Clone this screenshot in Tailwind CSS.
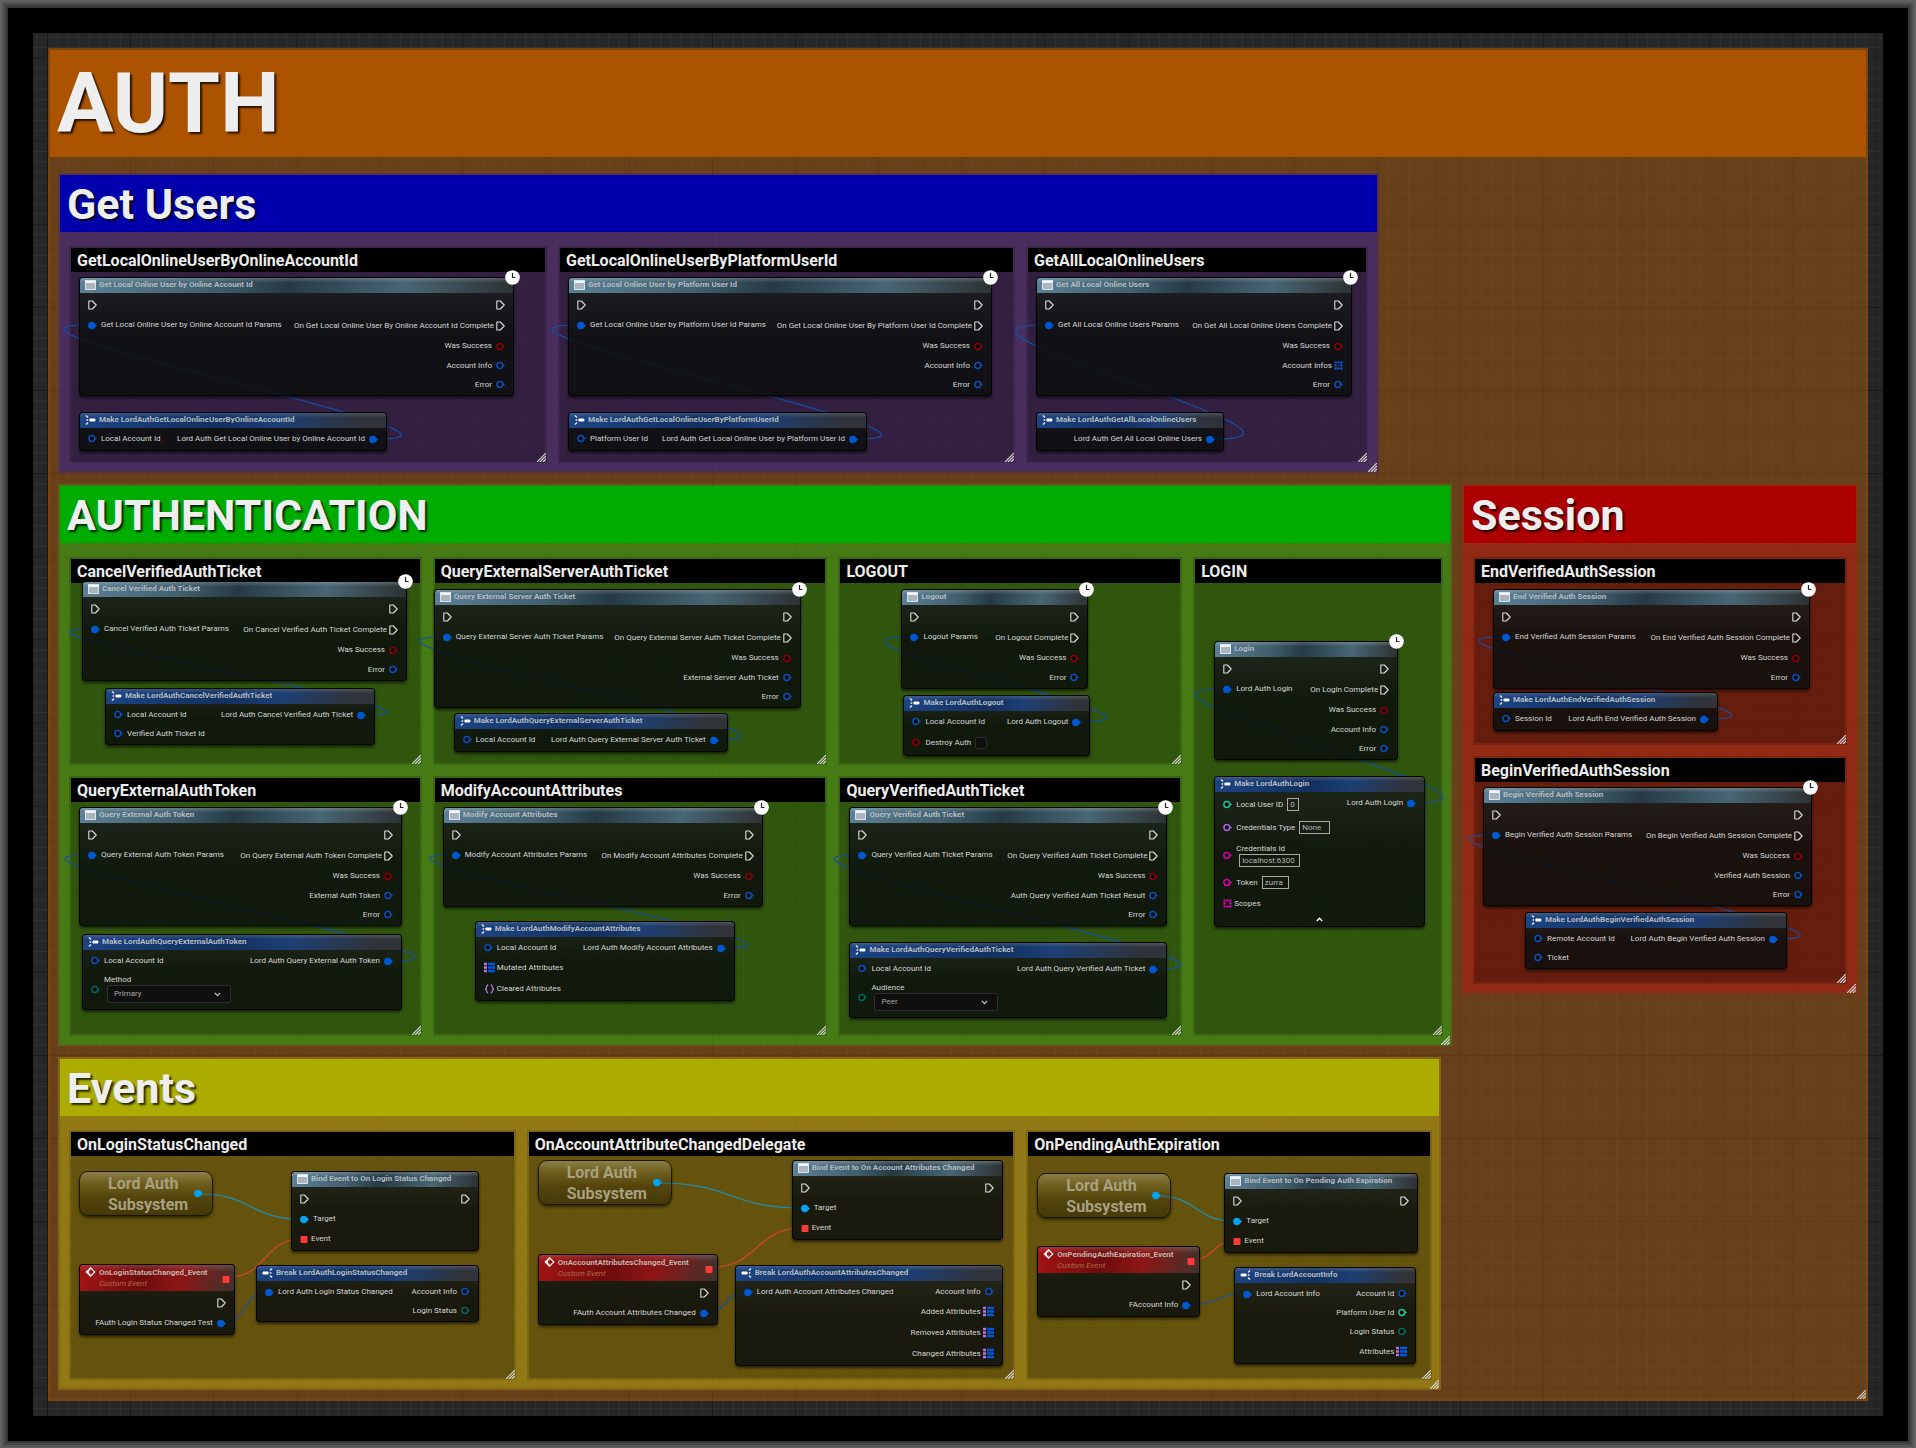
<!DOCTYPE html>
<html lang="en">
<head>
<meta charset="utf-8">
<meta name="viewport" content="width=device-width, initial-scale=1">
<title>Auth blueprint graph</title>
<script src="https://cdn.jsdelivr.net/npm/@tailwindcss/browser@4"></script>
</head>
<body class="min-h-screen bg-black font-['Roboto',sans-serif] text-[#d6d6d6]">
<div class="flex min-h-screen flex-col p-[33px] shadow-[inset_0_0_0_2px_#616161,inset_0_0_0_4px_#545454,inset_0_0_0_6px_#474747,inset_0_0_0_8px_#363636]">
  <main class="relative flex grow flex-col bg-[#262626] p-[15px]">
    <!-- graph paper -->
    <svg class="absolute inset-0 h-full w-full" aria-hidden="true">
      <defs>
        <pattern id="minor" width="10.39" height="10.39" patternUnits="userSpaceOnUse" x="14" y="24.5">
          <path d="M0 .5H10.39M.5 0V10.39" stroke="#313131" fill="none"/>
        </pattern>
        <pattern id="major" width="83.12" height="83.12" patternUnits="userSpaceOnUse" x="14" y="24.5">
          <path d="M0 .5H83.12M.5 0V83.12" stroke="#181818" fill="none"/>
        </pattern>
      </defs>
      <rect width="100%" height="100%" fill="url(#minor)"/>
      <rect width="100%" height="100%" fill="url(#major)"/>
    </svg>

    <div class="relative flex grow flex-col border-2 border-[#a05000]/30 bg-[#a8590e]/50">
      <header class="flex h-[107px] items-center bg-[#ac5300] px-[7px]">
        <h1 class="text-[84px] leading-none font-bold text-[#eee] [text-shadow:2px_2px_2px_#000c]">AUTH</h1>
      </header>

      <div class="flex flex-col gap-[11px] px-2 pt-4 pb-[9px]">
        <div class="grid grid-cols-[1321fr_479fr]">
          <section class="relative min-w-0 border-2 border-[#2618af]/30 bg-[#2618af]/45 bg-clip-padding">
            <header class="flex h-[57px] items-center bg-[#0000ac] px-[7px] pt-[2px]">
              <h2 class="text-[43px] leading-none font-bold text-[#eee] [text-shadow:2px_2px_2px_#000c]">Get Users</h2>
            </header>
            <div id="users" class="grid grid-cols-[478fr_457fr_342fr] gap-[11px] px-[9px] pt-[14px] pb-2"></div>
            <svg class="absolute right-0 -bottom-px size-[9px]" viewBox="0 0 9 9" aria-hidden="true"><path d="M0 9L9 0M3 9L9 3M6 9L9 6" stroke="#d8d8d8" stroke-width="1.2"/></svg>
          </section>
        </div>

        <div class="grid grid-cols-[1394fr_396fr] items-start gap-[10px]">
          <section class="relative min-w-0 border-2 border-[#1dc10d]/30 bg-[#1dc10d]/45 bg-clip-padding">
            <header class="flex h-[57px] items-center bg-[#00ac00] px-[7px] pt-[2px]">
              <h2 class="text-[43px] leading-none font-bold text-[#eee] [text-shadow:2px_2px_2px_#000c]">AUTHENTICATION</h2>
            </header>
            <div id="authentication" class="grid grid-cols-[353fr_395fr_344fr_250fr] gap-[11px] pt-[14px] pr-[7px] pb-2 pl-[9px]"></div>
            <svg class="absolute right-0 -bottom-px size-[9px]" viewBox="0 0 9 9" aria-hidden="true"><path d="M0 9L9 0M3 9L9 3M6 9L9 6" stroke="#d8d8d8" stroke-width="1.2"/></svg>
          </section>
          <section class="relative min-w-0 border-2 border-[#c30f0d]/30 bg-[#c30f0d]/45 bg-clip-padding">
            <header class="flex h-[57px] items-center bg-[#ac0000] px-[7px] pt-[2px]">
              <h2 class="text-[43px] leading-none font-bold text-[#eee] [text-shadow:2px_2px_2px_#000c]">Session</h2>
            </header>
            <div id="session" class="grid gap-[11px] px-[9px] pt-[14px] pb-2"></div>
            <svg class="absolute right-0 -bottom-px size-[9px]" viewBox="0 0 9 9" aria-hidden="true"><path d="M0 9L9 0M3 9L9 3M6 9L9 6" stroke="#d8d8d8" stroke-width="1.2"/></svg>
          </section>
        </div>

        <div class="grid grid-cols-[1383fr_417fr]">
          <section class="relative min-w-0 border-2 border-[#c5bd0d]/30 bg-[#c5bd0d]/45 bg-clip-padding">
            <header class="flex h-[57px] items-center bg-[#acac00] px-[7px] pt-[2px]">
              <h2 class="text-[43px] leading-none font-bold text-[#eee] [text-shadow:2px_2px_2px_#000c]">Events</h2>
            </header>
            <div id="events" class="grid grid-cols-[447fr_489fr_406fr] gap-[11px] pt-[14px] pr-[7px] pb-2 pl-[9px]"></div>
            <svg class="absolute right-0 -bottom-px size-[9px]" viewBox="0 0 9 9" aria-hidden="true"><path d="M0 9L9 0M3 9L9 3M6 9L9 6" stroke="#d8d8d8" stroke-width="1.2"/></svg>
          </section>
        </div>
      </div>
      <svg class="absolute right-0 bottom-0 size-[9px]" viewBox="0 0 9 9" aria-hidden="true"><path d="M0 9L9 0M3 9L9 3M6 9L9 6" stroke="#d8d8d8" stroke-width="1.2"/></svg>
    </div>
  </main>
</div>

<script>
const svg = (w, h, body, cls = '') =>
  `<svg class="shrink-0 ${cls}" width="${w}" height="${h}" viewBox="0 0 ${w} ${h}" fill="none" aria-hidden="true">${body}</svg>`;

// Pin glyphs
const ring = c => svg(9, 9, `<circle cx="3.8" cy="4.5" r="2.9" fill="#060a0c" stroke="${c}" stroke-width="1.5"/><path d="M7.2 3L9 4.5L7.2 6z" fill="${c}"/>`);
const dot = c => svg(9, 9, `<circle cx="3.8" cy="4.5" r="3.7" fill="${c}"/><path d="M7 2.8L9 4.5L7 6.2z" fill="${c}"/>`);
const PINS = {
  exec: svg(9, 10, '<path d="M.8 1H4.3L8.2 5L4.3 9H.8z" stroke="#dcdcdc" stroke-width="1.1" stroke-linejoin="round"/>'),
  blue: ring('#0a50b8'), bool: ring('#8c0202'), int: ring('#1fc795'), enum: ring('#00695a'),
  name: ring('#a565d8'), str: ring('#d800a8'), full: dot('#0058d0'), obj: dot('#00a2f2'),
  delegate: svg(9, 9, '<rect x=".5" y="1" width="7" height="7" rx="1" fill="#ff3838"/>'),
  array: svg(9, 9, '<path d="M.5 1.5H8.5M.5 7.5H8.5M.5 4.5H2.7M6.3 4.5H8.5" stroke="#0a5fe0" stroke-width="2" stroke-dasharray="2.2 .7"/><rect x="4" y="4" width="1" height="1" fill="#0a5fe0"/>'),
  strArray: svg(9, 9, '<path d="M.5 1.5H8.5M.5 7.5H8.5M.5 4.5H2.7M6.3 4.5H8.5" stroke="#f000b8" stroke-width="2" stroke-dasharray="2.2 .7"/>'),
  map: svg(11, 11, '<path d="M0 2H3M0 5.5H3M0 9H3" stroke="#b672e8" stroke-width="2.4"/><path d="M4 2H11M4 5.5H11M4 9H11" stroke="#0058e0" stroke-width="2.4"/>'),
  set: svg(11, 10, '<path d="M4.2 1C1.8 1 3.6 4.4 1.2 5C3.6 5.6 1.8 9 4.2 9M6.8 1C9.2 1 7.4 4.4 9.8 5C7.4 5.6 9.2 9 6.8 9" stroke="#b672e8" stroke-width="1.3"/>')
};

// Title bar glyphs
const ICONS = {
  async: svg(11, 10, '<rect width="11" height="10" fill="#a9b6bf"/><rect width="11" height="3" fill="#f2f6f8"/><path d="M.5 .5H10.5V9.5H.5z" stroke="#dce4e9"/>'),
  make: svg(11, 10, '<path d="M1 .5L3 2.5M1 9.5L3 7.5" stroke="#e6e6e6" stroke-width="1.5"/><rect x="1.6" y="4.2" width="1.6" height="1.6" fill="#e6e6e6"/><rect x="4.4" y="3.5" width="6" height="3" rx="1" fill="#fff"/>'),
  break: svg(11, 10, '<path d="M10 .5L8 2.5M10 9.5L8 7.5" stroke="#e6e6e6" stroke-width="1.5"/><rect x="7.8" y="4.2" width="1.6" height="1.6" fill="#e6e6e6"/><rect x=".6" y="3.5" width="6" height="3" rx="1" fill="#fff"/>'),
  event: svg(11, 10, '<path d="M5.5 .8L9.8 5L5.5 9.2L1.2 5z" stroke="#eee" stroke-width="1.2"/><path d="M5.5 .8L1.2 5L5.5 9.2V6.6H4V3.4H5.5z" fill="#eee"/>')
};
ICONS.bind = ICONS.async;

const HEADS = {
  async: 'bg-[linear-gradient(180deg,#ffffff33,transparent_30%),linear-gradient(100deg,#5c8096,#42606f_30%,#263a46_48%,#486674_75%,#2d3133)]',
  make: 'bg-[linear-gradient(180deg,#ffffff26,transparent_30%),linear-gradient(100deg,#1d4483,#12305f_45%,#1d3f74_65%,#30333a_92%)]',
  event: 'bg-[linear-gradient(180deg,#ffffff26,transparent_25%),linear-gradient(100deg,#a31414,#6e0c0c_40%,#8d1616_65%,#45302a_98%)]'
};
HEADS.bind = HEADS.async;
HEADS.break = HEADS.make;

const clock = svg(15, 15, '<circle cx="7.5" cy="7.5" r="7.3" fill="#fff"/><path d="M7.5 3V7.5H10.5" stroke="#222" stroke-width="1.2"/>', 'absolute -top-2 -right-[7px]');

// Row height of each kind of pin
const ROWS = {exec: 'h-[21px]', full: 'h-5', bool: 'h-5', obj: 'h-5', delegate: 'h-5', map: 'h-[21px]', set: 'h-[21px]'};
const rowOf = kind => ROWS[kind] || 'h-[19px]';
const TIGHT = ['exec', 'array', 'strArray', 'delegate', 'map', 'set'];
const gapOf = kind => TIGHT.includes(kind) ? 'gap-[2px]' : 'gap-1';

let fieldId = 0;
const pinIn = p => {
  const [kind, label, extra, value] = p;
  const pin = PINS[kind];
  const gap = gapOf(kind);
  const id = 'field' + (++fieldId);
  if (extra === 'text') return `<div class="flex h-[23px] items-center ${gap}">${pin}<label for="${id}">${label}</label><input id="${id}" value="${value[0]}" class="h-[13px] border border-[#a8a8a8] px-[2px] text-[8px] leading-none text-[#b4b4b4] ${value[1]}"></div>`;
  if (extra === 'stacked') return `<div class="flex h-8 items-center ${gap}">${pin}<div class="flex flex-col"><label for="${id}">${label}</label><input id="${id}" value="${value[0]}" class="ml-[3px] h-[13px] border border-[#a8a8a8] px-[2px] text-[8px] leading-none text-[#b4b4b4] ${value[1]}"></div></div>`;
  if (extra === 'check') return `<div class="flex h-[23px] items-center ${gap}">${pin}<label for="${id}">${label}</label><input id="${id}" type="checkbox" class="size-3 appearance-none rounded-[2px] border border-[#2c2c2c] bg-[#0f0f0f]"></div>`;
  if (extra === 'select') return `<div class="flex h-[38px] items-center ${gap}">${pin}<div class="flex flex-col"><label for="${id}">${label}</label><div class="relative ml-[3px]"><select id="${id}" class="block h-[18px] w-[124px] appearance-none rounded-[2px] border border-[#2e2e2e] bg-[#0f0f0f] px-[6px] text-[8px] leading-none text-[#a8a8a8]"><option>${value}</option></select>${svg(7, 5, '<path d="M.8 .8L3.5 3.6L6.2 .8" stroke="#c8c8c8" stroke-width="1.2"/>', 'pointer-events-none absolute top-[7px] right-[10px]')}</div></div></div>`;
  return `<div class="flex items-center ${rowOf(kind)} ${gap}">${pin}${label ? `<span>${label}</span>` : ''}</div>`;
};
const pinOut = ([kind, label]) =>
  `<div class="flex items-center justify-end ${rowOf(kind)} ${gapOf(kind)}">${label ? `<span>${label}</span>` : ''}${PINS[kind]}</div>`;

function node(n) {
  const place = `style="left:${n.x}px;top:${n.y}px;width:${n.w}px"`;
  if (n.type === 'variable') {
    return `<div class="absolute flex h-[45px] items-center justify-between rounded-[9px] border border-[#1a1804] bg-[linear-gradient(180deg,#ffffff40,#ffffff12_25%,#00000030_60%,#00000050)] pr-[9px] pl-7 text-[16px] leading-[21px] font-bold text-[#a8a080] shadow-[0_2px_3px_#0008]" ${place}><span>Lord Auth<br>Subsystem</span>${PINS.obj}</div>`;
  }
  const head = n.type === 'event'
    ? `<header class="flex h-[26px] items-start gap-[3px] rounded-t-[3px] pt-[2px] pr-[3px] pl-[5px] ${HEADS.event}">${ICONS.event}<div class="grow font-bold leading-[11px] text-[#c4b4ae]"><h4>${n.title}</h4><p class="font-normal text-[#b06a4c] italic">Custom Event</p></div><span class="self-center">${PINS.delegate}</span></header>`
    : `<header class="flex h-[15px] items-center gap-[3px] rounded-t-[3px] pb-px pl-[5px] ${HEADS[n.type]}">${ICONS[n.type]}<h4 class="font-bold text-[#b3bbc0]">${n.title}</h4></header>`;
  return `<div class="absolute rounded-[4px] border border-black/80 bg-[linear-gradient(180deg,#ffffff10,transparent_50%)] bg-[#0c0f0e]/85 text-[8px] leading-[10px] whitespace-nowrap shadow-[0_2px_3px_#0009]" ${place}>
    ${head}
    <div class="flex justify-between px-2 pt-px pb-px"><div>${n.in.map(pinIn).join('')}</div><div>${n.out.map(pinOut).join('')}</div></div>
    ${n.more ? `<button type="button" aria-label="Collapse" class="mx-auto flex h-3 items-start justify-center pt-[3px]">${svg(7, 5, '<path d="M.8 4L3.5 1.2L6.2 4" stroke="#fff" stroke-width="1.4"/>')}</button>` : ''}
    ${n.type === 'async' ? clock : ''}
  </div>`;
}

// Wires leave an output to the right and enter an input from the left
function wire(x1, y1, x2, y2, color) {
  const d = x2 > x1 ? (x2 - x1) / 2 : 95 + 0.46 * Math.abs(y1 - y2);
  return `<path d="M${x1} ${y1}C${x1 + d} ${y1} ${x2 - d} ${y2} ${x2} ${y2}" stroke="${color}" stroke-width="1.2"/>`;
}

function comment(c) {
  return `<article class="relative min-w-0 border-2 border-black/15 bg-black/30 bg-clip-padding ${c.size}">
    <h3 class="flex h-6 items-center bg-black px-[6px] pt-[2px] text-[16px] leading-none font-bold text-[#ececec]">${c.title}</h3>
    <svg class="absolute inset-0 h-full w-full overflow-visible" fill="none" aria-hidden="true">${c.wires.join('')}</svg>
    ${c.nodes.map(node).join('')}
    ${svg(9, 9, '<path d="M0 9L9 0M3 9L9 3M6 9L9 6" stroke="#d8d8d8" stroke-width="1.2"/>', 'absolute -right-px -bottom-px')}
  </article>`;
}

const BLUE = '#1450a8';

// An async call with the "Make" node that feeds its params
function call(title, size, a, m) {
  const A = {type: 'async', x: a.at[0], y: a.at[1], w: a.at[2], title: a.title,
    in: [['exec'], ['full', a.params || a.title + ' Params']],
    out: [['exec'], ['exec', `On ${a.done || a.title} Complete`], ['bool', 'Was Success'], ...a.out]};
  const M = {type: 'make', x: m.at[0], y: m.at[1], w: m.at[2], title: 'Make ' + m.title, in: m.in, out: [['full', m.out]], more: m.more};
  return comment({title, size, nodes: [A, M],
    wires: [wire(M.x + M.w - 10, M.y + 27, A.x + 9, A.y + 48, BLUE)]});
}

function event(title, size, v, b, e, k) {
  return comment({title, size,
    wires: [
      wire(v[0] + 122, v[1] + 23, b.at[0] + 9, b.at[1] + 48, '#1c8fb8'),
      wire(e.at[0] + e.at[2] - 5, e.at[1] + 13, b.at[0] + 9, b.at[1] + 68, '#d8442c'),
      wire(e.at[0] + e.at[2] - 10, e.at[1] + 59, k.at[0] + 9, k.at[1] + 27, BLUE)],
    nodes: [
      {type: 'variable', x: v[0], y: v[1], w: 134},
      {type: 'bind', x: b.at[0], y: b.at[1], w: b.at[2], title: b.title, in: [['exec'], ['obj', 'Target'], ['delegate', 'Event']], out: [['exec']]},
      {type: 'event', x: e.at[0], y: e.at[1], w: e.at[2], title: e.title, in: [], out: [['exec'], ['full', e.out]]},
      {type: 'break', x: k.at[0], y: k.at[1], w: k.at[2], title: 'Break ' + k.title, in: [['full', k.in]], out: k.out}]});
}

document.getElementById('users').innerHTML = [
  call('GetLocalOnlineUserByOnlineAccountId', 'min-h-[217px]',
    {at: [8, 29, 435], title: 'Get Local Online User by Online Account Id', done: 'Get Local Online User By Online Account Id', out: [['blue', 'Account Info'], ['blue', 'Error']]},
    {at: [8, 164, 308], title: 'LordAuthGetLocalOnlineUserByOnlineAccountId', in: [['blue', 'Local Account Id']], out: 'Lord Auth Get Local Online User by Online Account Id'}),
  call('GetLocalOnlineUserByPlatformUserId', 'min-h-[217px]',
    {at: [8, 29, 424], title: 'Get Local Online User by Platform User Id', done: 'Get Local Online User By Platform User Id', out: [['blue', 'Account Info'], ['blue', 'Error']]},
    {at: [8, 164, 299], title: 'LordAuthGetLocalOnlineUserByPlatformUserId', in: [['blue', 'Platform User Id']], out: 'Lord Auth Get Local Online User by Platform User Id'}),
  call('GetAllLocalOnlineUsers', 'min-h-[217px]',
    {at: [8, 29, 316], title: 'Get All Local Online Users', out: [['array', 'Account Infos'], ['blue', 'Error']]},
    {at: [8, 164, 188], title: 'LordAuthGetAllLocalOnlineUsers', in: [], out: 'Lord Auth Get All Local Online Users'})
].join('');

document.getElementById('authentication').innerHTML = [
  call('CancelVerifiedAuthTicket', 'min-h-[208px]',
    {at: [11, 22, 325], title: 'Cancel Verified Auth Ticket', out: [['blue', 'Error']]},
    {at: [34, 129, 270], title: 'LordAuthCancelVerifiedAuthTicket', in: [['blue', 'Local Account Id'], ['blue', 'Verified Auth Ticket Id']], out: 'Lord Auth Cancel Verified Auth Ticket'}),
  call('QueryExternalServerAuthTicket', 'min-h-[208px]',
    {at: [-1, 30, 367], title: 'Query External Server Auth Ticket', out: [['blue', 'External Server Auth Ticket'], ['blue', 'Error']]},
    {at: [19, 154, 274], title: 'LordAuthQueryExternalServerAuthTicket', in: [['blue', 'Local Account Id']], out: 'Lord Auth Query External Server Auth Ticket'}),
  call('LOGOUT', 'min-h-[208px]',
    {at: [61, 30, 187], title: 'Logout', out: [['blue', 'Error']]},
    {at: [63, 136, 187], title: 'LordAuthLogout', in: [['blue', 'Local Account Id'], ['bool', 'Destroy Auth', 'check']], out: 'Lord Auth Logout'}),
  call('LOGIN', 'row-span-2',
    {at: [19, 82, 184], title: 'Login', params: 'Lord Auth Login', out: [['blue', 'Account Info'], ['blue', 'Error']]},
    {at: [19, 217, 211], title: 'LordAuthLogin', more: true, out: 'Lord Auth Login',
      in: [['int', 'Local User ID', 'text', ['0', 'w-3']], ['name', 'Credentials Type', 'text', ['None', 'w-[31px]']],
        ['str', 'Credentials Id', 'stacked', ['localhost:6300', 'w-[61px]']], ['str', 'Token', 'text', ['zurra', 'w-[27px]']], ['strArray', 'Scopes']]}),
  call('QueryExternalAuthToken', 'min-h-[260px]',
    {at: [8, 29, 323], title: 'Query External Auth Token', out: [['blue', 'External Auth Token'], ['blue', 'Error']]},
    {at: [11, 156, 320], title: 'LordAuthQueryExternalAuthToken', in: [['blue', 'Local Account Id'], ['enum', 'Method', 'select', 'Primary']], out: 'Lord Auth Query External Auth Token'}),
  call('ModifyAccountAttributes', 'min-h-[260px]',
    {at: [8, 29, 320], title: 'Modify Account Attributes', out: [['blue', 'Error']]},
    {at: [40, 143, 260], title: 'LordAuthModifyAccountAttributes', in: [['blue', 'Local Account Id'], ['map', 'Mutated Attributes'], ['set', 'Cleared Attributes']], out: 'Lord Auth Modify Account Attributes'}),
  call('QueryVerifiedAuthTicket', 'min-h-[260px]',
    {at: [9, 29, 318], title: 'Query Verified Auth Ticket', out: [['blue', 'Auth Query Verified Auth Ticket Result'], ['blue', 'Error']]},
    {at: [9, 164, 318], title: 'LordAuthQueryVerifiedAuthTicket', in: [['blue', 'Local Account Id'], ['enum', 'Audience', 'select', 'Peer']], out: 'Lord Auth Query Verified Auth Ticket'})
].join('');

document.getElementById('session').innerHTML = [
  call('EndVerifiedAuthSession', 'min-h-[188px]',
    {at: [18, 30, 317], title: 'End Verified Auth Session', out: [['blue', 'Error']]},
    {at: [18, 133, 225], title: 'LordAuthEndVerifiedAuthSession', in: [['blue', 'Session Id']], out: 'Lord Auth End Verified Auth Session'}),
  call('BeginVerifiedAuthSession', 'min-h-[228px]',
    {at: [8, 29, 329], title: 'Begin Verified Auth Session', out: [['blue', 'Verified Auth Session'], ['blue', 'Error']]},
    {at: [50, 154, 262], title: 'LordAuthBeginVerifiedAuthSession', in: [['blue', 'Remote Account Id'], ['blue', 'Ticket']], out: 'Lord Auth Begin Verified Auth Session'})
].join('');

document.getElementById('events').innerHTML = [
  event('OnLoginStatusChanged', 'min-h-[250px]', [8, 39],
    {at: [220, 39, 188], title: 'Bind Event to On Login Status Changed'},
    {at: [8, 132, 156], title: 'OnLoginStatusChanged_Event', out: 'FAuth Login Status Changed Test'},
    {at: [185, 133, 223], title: 'LordAuthLoginStatusChanged', in: 'Lord Auth Login Status Changed', out: [['blue', 'Account Info'], ['enum', 'Login Status']]}),
  event('OnAccountAttributeChangedDelegate', 'min-h-[250px]', [9, 28],
    {at: [263, 28, 211], title: 'Bind Event to On Account Attributes Changed'},
    {at: [9, 122, 180], title: 'OnAccountAttributesChanged_Event', out: 'FAuth Account Attributes Changed'},
    {at: [206, 133, 268], title: 'LordAuthAccountAttributesChanged', in: 'Lord Auth Account Attributes Changed', out: [['blue', 'Account Info'], ['map', 'Added Attributes'], ['map', 'Removed Attributes'], ['map', 'Changed Attributes']]}),
  event('OnPendingAuthExpiration', 'min-h-[250px]', [9, 41],
    {at: [196, 41, 194], title: 'Bind Event to On Pending Auth Expiration'},
    {at: [9, 114, 163], title: 'OnPendingAuthExpiration_Event', out: 'FAccount Info'},
    {at: [206, 135, 182], title: 'LordAccountInfo', in: 'Lord Account Info', out: [['blue', 'Account Id'], ['int', 'Platform User Id'], ['enum', 'Login Status'], ['map', 'Attributes']]})
].join('');
</script>
</body>
</html>
